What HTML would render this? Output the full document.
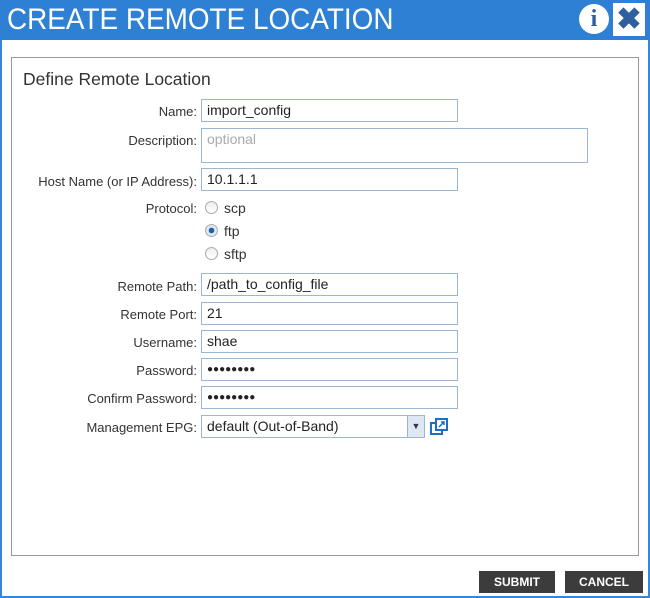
<!DOCTYPE html>
<html><head><style>
body{margin:0;width:650px;height:598px;background:#fff;font-family:"Liberation Sans",sans-serif;position:relative;overflow:hidden}
.frame{position:absolute;left:0;top:0;width:646px;height:596px;border:2px solid #3a86d6;border-top:none}
.title{position:absolute;left:0;top:0;width:650px;height:40px;background:#2e80d5;color:#fff;font-size:30px;line-height:40px}
.title span{position:absolute;left:7px;top:0;transform:scaleX(0.93);transform-origin:left}
.panel{position:absolute;left:11px;top:57px;width:626px;height:497px;border:1px solid #9a9a9a}
.h{position:absolute;left:23px;top:69px;font-size:17.5px;color:#333}
.l{position:absolute;right:453px;font-size:13px;color:#333}
.i{position:absolute;left:201px;border:1px solid #9cb6d2;font-size:14px;color:#222;line-height:21px;padding-left:5px;box-sizing:border-box;width:257px;height:23px}
.r{position:absolute;left:205px;width:11px;height:11px;border-radius:50%;border:1px solid #aaa;background:linear-gradient(#eee,#fff)}
.rl{position:absolute;left:224px;font-size:14px;color:#333}
.b{position:absolute;top:571px;height:22px;background:#3c3c3c;color:#fff;font-weight:bold;font-size:12px;line-height:22px;text-align:center}
</style></head><body>
<div class="frame"></div>
<div class="title"><span>CREATE REMOTE LOCATION</span>
<div style="position:absolute;left:579px;top:4px;width:30px;height:30px;border-radius:50%;background:#fff;color:#2e5fa0;font:bold 24px 'Liberation Serif',serif;text-align:center;line-height:31px">i</div>
<div style="position:absolute;left:613px;top:3px;width:32px;height:33px;background:#fff;color:#2e5fa0;font:bold 30px 'Liberation Sans',sans-serif;text-align:center;line-height:33px">✖</div></div>
<div class="panel"></div>
<div class="h">Define Remote Location</div>
<div class="l" style="top:104px">Name:</div><div class="i" style="top:99px">import_config</div>
<div class="l" style="top:133px">Description:</div><div class="i" style="top:128px;width:387px;height:35px;line-height:20px;color:#aaa">optional</div>
<div class="l" style="top:174px">Host Name (or IP Address):</div><div class="i" style="top:168px">10.1.1.1</div>
<div class="l" style="top:201px">Protocol:</div>
<div class="r" style="top:201px"></div><div class="rl" style="top:200px">scp</div>
<div class="r" style="top:224px;background:radial-gradient(circle,#1a5fa8 2.5px,#dde8f3 3px)"></div><div class="rl" style="top:223px">ftp</div>
<div class="r" style="top:247px"></div><div class="rl" style="top:246px">sftp</div>
<div class="l" style="top:279px">Remote Path:</div><div class="i" style="top:273px">/path_to_config_file</div>
<div class="l" style="top:307px">Remote Port:</div><div class="i" style="top:302px">21</div>
<div class="l" style="top:335px">Username:</div><div class="i" style="top:330px">shae</div>
<div class="l" style="top:363px">Password:</div><div class="i" style="top:358px;font-size:10px">●●●●●●●●</div>
<div class="l" style="top:391px">Confirm Password:</div><div class="i" style="top:386px;font-size:10px">●●●●●●●●</div>
<div class="l" style="top:420px">Management EPG:</div><div class="i" style="top:415px;width:224px">default (Out-of-Band)
<div style="position:absolute;right:0;top:0;width:16px;height:21px;background:#dfe8f2;border-left:1px solid #9cb6d2;font-size:9px;text-align:center;color:#335">▼</div></div>
<svg style="position:absolute;left:430px;top:418px" width="18" height="18" viewBox="0 0 18 18"><rect x="1" y="5" width="11" height="11" fill="none" stroke="#1a6fc9" stroke-width="2"/><rect x="6" y="1" width="11" height="11" fill="#fff" stroke="#1a6fc9" stroke-width="2"/><path d="M9 9 L14 4 M11 4 H14 V7" stroke="#1a6fc9" stroke-width="1.5" fill="none"/></svg>
<div class="b" style="left:479px;width:76px">SUBMIT</div>
<div class="b" style="left:565px;width:78px">CANCEL</div>
</body></html>
